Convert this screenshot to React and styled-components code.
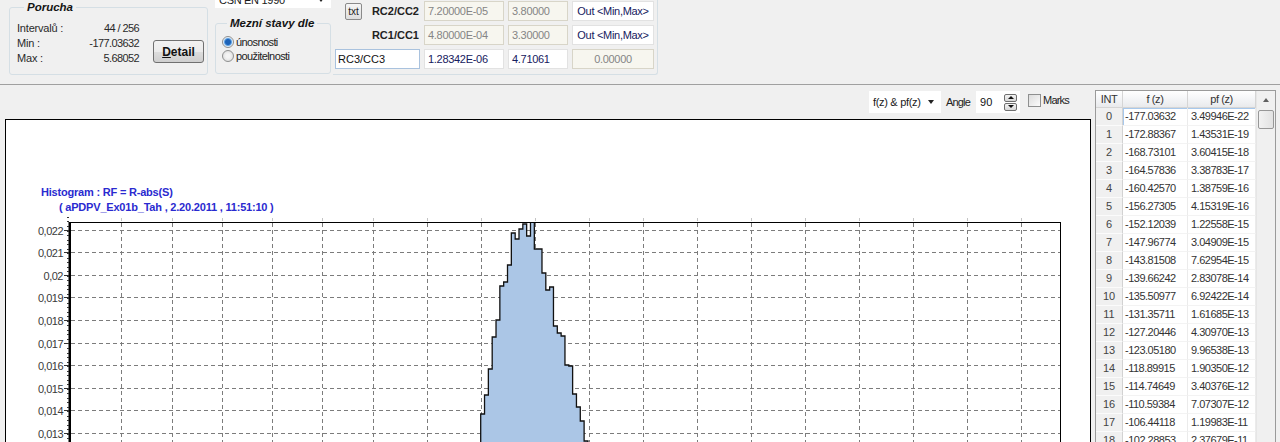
import React from 'react';
import styled, { createGlobalStyle } from 'styled-components';

const FONT = `'Liberation Sans', Arial, sans-serif`;

const GlobalStyle = createGlobalStyle`
  * { box-sizing: border-box; }
  html, body { margin: 0; padding: 0; background: #f0f0f0; overflow: hidden; }
  body { font-family: ${FONT}; font-size: 11px; color: #1f1f1f; }
`;

const Page = styled.div`
  width: 1280px;
  height: 442px;
  overflow: hidden;
  display: flex;
  flex-direction: column;
`;

// ---------- top panel ----------

const TopPanel = styled.div`
  display: flex;
  align-items: flex-start;
  height: 85px;
  flex: none;
  border-bottom: 1px solid #a0a0a0;
`;

const GroupBox = styled.fieldset`
  margin: ${(p) => p.$mt || 0}px 0 0 ${(p) => p.$ml || 0}px;
  padding: 0;
  width: ${(p) => p.$w}px;
  height: ${(p) => p.$h}px;
  min-width: 0;
  border: 1px solid #d5dfe5;
  border-radius: 3px;
`;

const Legend = styled.legend`
  margin-left: ${(p) => p.$indent}px;
  padding: 0 3px;
  font: italic bold 11.5px ${FONT};
  line-height: 14px;
  color: #141414;
`;

const GroupBody = styled.div`
  display: flex;
  align-items: flex-start;
  padding: ${(p) => p.$pad};
`;

const Stats = styled.div`
  display: grid;
  grid-template-columns: 56px 66px;
  line-height: 15px;
`;

const StatLabel = styled.span`
  letter-spacing: -0.2px;
  color: #2a2a2a;
`;

const StatValue = styled.span`
  text-align: right;
  letter-spacing: -0.6px;
  color: #2a2a2a;
`;

const Button = styled.button`
  margin: 19px 0 0 14px;
  width: 51px;
  height: 23px;
  padding: 0;
  border: 1px solid #707070;
  border-radius: 3px;
  background: linear-gradient(#f2f2f2 0%, #ebebeb 50%, #dddddd 51%, #cfcfcf 100%);
  font: bold 12px ${FONT};
  color: #111;
  u { text-decoration: underline; }
`;

const StackColumn = styled.div`
  display: flex;
  flex-direction: column;
  margin-left: ${(p) => p.$ml}px;
`;

const Combo = styled.div`
  position: relative;
  width: ${(p) => p.$w}px;
  height: ${(p) => p.$h}px;
  margin-top: ${(p) => p.$mt || 0}px;
  padding: ${(p) => p.$pt || 0}px 0 0 3px;
  background: #fff;
  border: 1px solid ${(p) => (p.$bordered ? '#abadb3' : '#fff')};
  display: flex;
  align-items: center;
  justify-content: space-between;
  color: #1a1a1a;
  letter-spacing: -0.3px;
`;

const ComboArrow = styled.span`
  margin-right: 6px;
  width: 0;
  height: 0;
  border-left: 3.5px solid transparent;
  border-right: 3.5px solid transparent;
  border-top: 4px solid #222;
`;

const RadioRow = styled.label`
  display: flex;
  align-items: center;
  height: 14px;
  gap: 2px;
  letter-spacing: -0.6px;
  color: #222;
`;

const RadioDot = styled.span`
  width: 12px;
  height: 12px;
  border-radius: 50%;
  border: 1px solid #8e8f8f;
  background: ${(p) =>
    p.$checked
      ? 'radial-gradient(circle, #1d63b8 0 2.5px, #5fa0e0 3.5px, #d9ecff 4.5px, #f4f4f4 5px)'
      : 'radial-gradient(circle, #f4f4f4 0 2px, #e2e2e2 5px)'};
`;

const LimitGroup = styled.div`
  margin-left: 2px;
  height: 75px;
  padding: 1px 3px 4px 2px;
  border-right: 1px solid #d5dfe5;
  border-bottom: 1px solid #d5dfe5;
  border-bottom-right-radius: 3px;
`;

const LimitGrid = styled.div`
  display: grid;
  grid-template-columns: 85px 80px 60px 82px;
  grid-auto-rows: 20px;
  column-gap: 4px;
  row-gap: 4px;
`;

const RowHead = styled.div`
  display: flex;
  align-items: center;
`;

const TxtButton = styled.button`
  margin: 1px 0 0 10px;
  width: 17px;
  height: 17px;
  padding: 0;
  border: 1px solid #8a8a8a;
  border-radius: 2px;
  background: linear-gradient(#f6f6f6, #dedede);
  font: 10px ${FONT};
  color: #222;
`;

const RowLabel = styled.span`
  margin-left: auto;
  padding-right: 1px;
  font-weight: bold;
  color: #222;
`;

const NameInput = styled.div`
  border: 1px solid #a9c2de;
  background: #fff;
  padding-left: 2px;
  line-height: 18px;
  color: #111;
`;

const ValueBox = styled.div`
  line-height: 18px;
  padding: 0 3px;
  border: 1px solid ${(p) => (p.$cream ? '#d8d5c8' : '#e2e2e2')};
  background: ${(p) => (p.$cream ? '#f7f6ef' : '#fff')};
  color: ${(p) => (p.$cream ? '#858585' : '#16205e')};
  text-align: ${(p) => (p.$center ? 'center' : 'left')};
  letter-spacing: -0.3px;
  white-space: nowrap;
`;

// ---------- lower area ----------

const LowerArea = styled.div`
  display: flex;
  flex: 1;
  min-height: 0;
  padding-top: 5px;
`;

const LeftColumn = styled.div`
  width: 1094px;
  flex: none;
  display: flex;
  flex-direction: column;
`;

const Toolbar = styled.div`
  height: 24px;
  flex: none;
  display: flex;
  align-items: center;
  justify-content: flex-end;
  padding-right: 25px;
`;

const ToolLabel = styled.span`
  margin-left: ${(p) => p.$ml}px;
  letter-spacing: -0.8px;
  color: #222;
`;

const SpinBox = styled.div`
  margin-left: 6px;
  width: 44px;
  height: 22px;
  background: #fff;
  display: flex;
  align-items: center;
  justify-content: space-between;
  padding: 0 3px 0 4px;
  color: #111;
`;

const SpinButtons = styled.div`
  display: flex;
  flex-direction: column;
  gap: 1px;
`;

const SpinButton = styled.span`
  width: 13px;
  height: 8px;
  border: 1px solid #6f6f6f;
  border-radius: 2px;
  background: linear-gradient(#f4f4f4, #d8d8d8);
  display: flex;
  align-items: center;
  justify-content: center;
  &::after {
    content: '';
    border-left: 3px solid transparent;
    border-right: 3px solid transparent;
    ${(p) => (p.$down ? 'border-top: 3px solid #111;' : 'border-bottom: 3px solid #111;')}
  }
`;

const CheckBox = styled.span`
  margin: -4px 0 0 8px;
  width: 13px;
  height: 13px;
  border: 1px solid #8e8f8f;
  background: linear-gradient(135deg, #dcdcdc, #fbfbfb);
`;

const ChartPanel = styled.div`
  flex: 1;
  margin: 5px 3px 0 5px;
  background: #fff;
  border: 1px solid #000;
  border-bottom: none;
  overflow: hidden;
`;

const ChartTitle = styled.div`
  margin: 65px 0 0 35px;
  font: bold 11px ${FONT};
  line-height: 15px;
  color: #2a2ad0;
  letter-spacing: -0.2px;
`;

const TitleLine = styled.div`
  padding-left: ${(p) => p.$indent || 0}px;
  white-space: nowrap;
`;

// ---------- table ----------

const TableFrame = styled.div`
  margin-left: 1px;
  width: 181px;
  height: 360px;
  flex: none;
  border: 1px solid #9a9a9a;
  background: #fff;
  display: flex;
`;

const TableGrid = styled.div`
  width: 160px;
`;

const HeaderRow = styled.div`
  display: flex;
  height: 17px;
`;

const HeaderCell = styled.div`
  width: ${(p) => p.$w}px;
  line-height: 16px;
  text-align: center;
  border-right: 1px solid #d5d5d5;
  border-bottom: 1px solid #d5d5d5;
  background: linear-gradient(#ffffff, #f4f5f7 50%, #e9eaec);
  letter-spacing: -0.4px;
  color: #333;
`;

const Row = styled.div`
  display: flex;
  height: 18px;
`;

const IntCell = styled.div`
  width: 27px;
  line-height: 17px;
  text-align: center;
  background: #f0f0f0;
  border-right: 1px solid #d2d2d2;
  border-bottom: 1px solid #fbfbfb;
  color: #444;
`;

const DataPair = styled.div`
  display: flex;
  box-shadow: ${(p) => (p.$selected ? 'inset 0 0 0 1px #a7c8ec' : 'none')};
`;

const DataCell = styled.div`
  width: ${(p) => p.$w}px;
  line-height: 17px;
  padding-left: ${(p) => p.$pl}px;
  border-right: 1px solid #ebebeb;
  border-bottom: 1px solid #f3f3f3;
  letter-spacing: -0.5px;
  color: #333;
  white-space: nowrap;
`;

const ScrollBar = styled.div`
  width: 19px;
  background: #f0f0f0;
  border-left: 1px solid #e6e6e6;
  display: flex;
  flex-direction: column;
  align-items: center;
`;

const ScrollArrow = styled.div`
  width: 17px;
  height: 17px;
  display: flex;
  align-items: center;
  justify-content: center;
  &::after {
    content: '';
    border-left: 3.5px solid transparent;
    border-right: 3.5px solid transparent;
    border-bottom: 4px solid #606060;
  }
`;

const ScrollThumb = styled.div`
  margin-top: 2px;
  width: 16px;
  height: 19px;
  border: 1px solid #979797;
  border-radius: 2px;
  background: linear-gradient(90deg, #f2f2f2, #e2e2e2);
`;

// ---------- data ----------

const STATS = [
  ['Intervalů :', '44 / 256'],
  ['Min :', '-177.03632'],
  ['Max :', '5.68052'],
];

const ROWS = [
  ['-177.03632', '3.49946E-22'],
  ['-172.88367', '1.43531E-19'],
  ['-168.73101', '3.60415E-18'],
  ['-164.57836', '3.38783E-17'],
  ['-160.42570', '1.38759E-16'],
  ['-156.27305', '4.15319E-16'],
  ['-152.12039', '1.22558E-15'],
  ['-147.96774', '3.04909E-15'],
  ['-143.81508', '7.62954E-15'],
  ['-139.66242', '2.83078E-14'],
  ['-135.50977', '6.92422E-14'],
  ['-131.35711', '1.61685E-13'],
  ['-127.20446', '4.30970E-13'],
  ['-123.05180', '9.96538E-13'],
  ['-118.89915', '1.90350E-12'],
  ['-114.74649', '3.40376E-12'],
  ['-110.59384', '7.07307E-12'],
  ['-106.44118', '1.19983E-11'],
  ['-102.28853', '2.37679E-11'],
];

// chart is drawn in page coordinates (svg starts at x 6, y 215)
const Y_LABELS = ['0,022', '0,021', '0,02', '0,019', '0,018', '0,017', '0,016', '0,015', '0,014', '0,013'];
const GRID_Y = Y_LABELS.map((_, i) => Math.round(229.5 + i * 22.6) + 0.5);
const GRID_X = [121, 172, 222, 272, 322, 373, 427, 481, 535, 589, 643, 697, 751, 805, 859, 913, 967, 1021].map((x) => x + 0.5);
const BIN_TOPS = [414, 395, 369, 337, 320, 286, 282, 265, 233, 239, 229, 224, 236, 200, 249, 249, 273, 290, 287, 326, 333, 336, 365, 366, 394, 407, 421, 441];
const BIN_X0 = 480.7;
const BIN_W = 3.83;

const histogramPath = () => {
  let d = `M${BIN_X0} 470`;
  BIN_TOPS.forEach((top, i) => {
    d += ` V${top} H${(BIN_X0 + (i + 1) * BIN_W).toFixed(2)}`;
  });
  return d + ' V470 Z';
};

const HistogramPlot = () => {
  const minorTicks = [];
  for (let y = GRID_Y[0] - 22.6; y < 442; y += 4.52) minorTicks.push(Math.round(y) + 0.5);
  return (
    <svg width="1084" height="227" viewBox="6 215 1084 227" style={{ display: 'block' }}>
      <defs>
        <clipPath id="plotClip">
          <rect x="70" y="222.5" width="990" height="300" />
        </clipPath>
      </defs>
      <g stroke="#7c7c7c" strokeWidth="1" strokeDasharray="4 3">
        {GRID_Y.map((y) => <line key={y} x1="71" y1={y} x2="1060" y2={y} />)}
        {GRID_X.map((x) => <line key={x} x1={x} y1="223" x2={x} y2="450" />)}
      </g>
      <g stroke="#c4c4c4">
        {GRID_X.map((x) => <line key={x} x1={x} y1="218" x2={x} y2="221" />)}
      </g>
      <path d={histogramPath()} fill="#abc6e6" stroke="#111" strokeWidth="1.3" clipPath="url(#plotClip)" />
      <line x1="70" y1="222.5" x2="1061" y2="222.5" stroke="#000" />
      <line x1="1060.5" y1="222" x2="1060.5" y2="450" stroke="#000" />
      <rect x="68.5" y="222" width="2.5" height="230" fill="#000" />
      <g stroke="#333">
        {minorTicks.map((y) => <line key={y} x1="67" y1={y} x2="69" y2={y} />)}
        {GRID_Y.map((y) => <line key={y} x1="64" y1={y} x2="69" y2={y} />)}
      </g>
      <g fontFamily="'Liberation Sans', Arial, sans-serif" fontSize="11" fill="#3a3a3a" textAnchor="end" letterSpacing="-0.5">
        {GRID_Y.map((y, i) => <text key={y} x="63" y={y + 4}>{Y_LABELS[i]}</text>)}
      </g>
    </svg>
  );
};

const App = () => (
  <Page>
    <GlobalStyle />
    <TopPanel>
      <GroupBox $ml={9} $w={199} $h={75}>
        <Legend $indent={14}>Porucha</Legend>
        <GroupBody $pad="7px 0 0 7px">
          <Stats>
            {STATS.map(([label, value]) => (
              <React.Fragment key={label}>
                <StatLabel>{label}</StatLabel>
                <StatValue>{value}</StatValue>
              </React.Fragment>
            ))}
          </Stats>
          <Button><u>D</u>etail</Button>
        </GroupBody>
      </GroupBox>

      <StackColumn $ml={7}>
        <Combo $w={116} $h={21} $mt={-13} $pt={4}>
          ČSN EN 1990
          <ComboArrow />
        </Combo>
        <GroupBox $mt={8} $w={116} $h={58}>
          <Legend $indent={11}>Mezní stavy dle</Legend>
          <GroupBody $pad="5px 0 0 6px" style={{ flexDirection: 'column' }}>
            <RadioRow><RadioDot $checked />únosnosti</RadioRow>
            <RadioRow><RadioDot />použitelnosti</RadioRow>
          </GroupBody>
        </GroupBox>
      </StackColumn>

      <LimitGroup>
        <LimitGrid>
          <RowHead>
            <TxtButton>txt</TxtButton>
            <RowLabel>RC2/CC2</RowLabel>
          </RowHead>
          <ValueBox $cream>7.20000E-05</ValueBox>
          <ValueBox $cream>3.80000</ValueBox>
          <ValueBox $center>Out &lt;Min,Max&gt;</ValueBox>

          <RowHead>
            <RowLabel>RC1/CC1</RowLabel>
          </RowHead>
          <ValueBox $cream>4.80000E-04</ValueBox>
          <ValueBox $cream>3.30000</ValueBox>
          <ValueBox $center>Out &lt;Min,Max&gt;</ValueBox>

          <NameInput>RC3/CC3</NameInput>
          <ValueBox>1.28342E-06</ValueBox>
          <ValueBox>4.71061</ValueBox>
          <ValueBox $cream $center>0.00000</ValueBox>
        </LimitGrid>
      </LimitGroup>
    </TopPanel>

    <LowerArea>
      <LeftColumn>
        <Toolbar>
          <Combo $w={72} $h={22}>
            f(z) &amp; pf(z)
            <ComboArrow />
          </Combo>
          <ToolLabel $ml={5}>Angle</ToolLabel>
          <SpinBox>
            90
            <SpinButtons>
              <SpinButton />
              <SpinButton $down />
            </SpinButtons>
          </SpinBox>
          <CheckBox />
          <ToolLabel $ml={2} style={{ marginTop: -4 }}>Marks</ToolLabel>
        </Toolbar>
        <ChartPanel>
          <ChartTitle>
            <TitleLine>Histogram : RF = R-abs(S)</TitleLine>
            <TitleLine $indent={18}>( aPDPV_Ex01b_Tah , 2.20.2011 , 11:51:10 )</TitleLine>
          </ChartTitle>
          <HistogramPlot />
        </ChartPanel>
      </LeftColumn>

      <TableFrame>
        <TableGrid>
          <HeaderRow>
            <HeaderCell $w={27}>INT</HeaderCell>
            <HeaderCell $w={65}>f (z)</HeaderCell>
            <HeaderCell $w={68}>pf (z)</HeaderCell>
          </HeaderRow>
          {ROWS.map(([fz, pfz], i) => (
            <Row key={i}>
              <IntCell>{i}</IntCell>
              <DataPair $selected={i === 0}>
                <DataCell $w={65} $pl={2}>{fz}</DataCell>
                <DataCell $w={68} $pl={3}>{pfz}</DataCell>
              </DataPair>
            </Row>
          ))}
        </TableGrid>
        <ScrollBar>
          <ScrollArrow />
          <ScrollThumb />
        </ScrollBar>
      </TableFrame>
    </LowerArea>
  </Page>
);

export default App;
